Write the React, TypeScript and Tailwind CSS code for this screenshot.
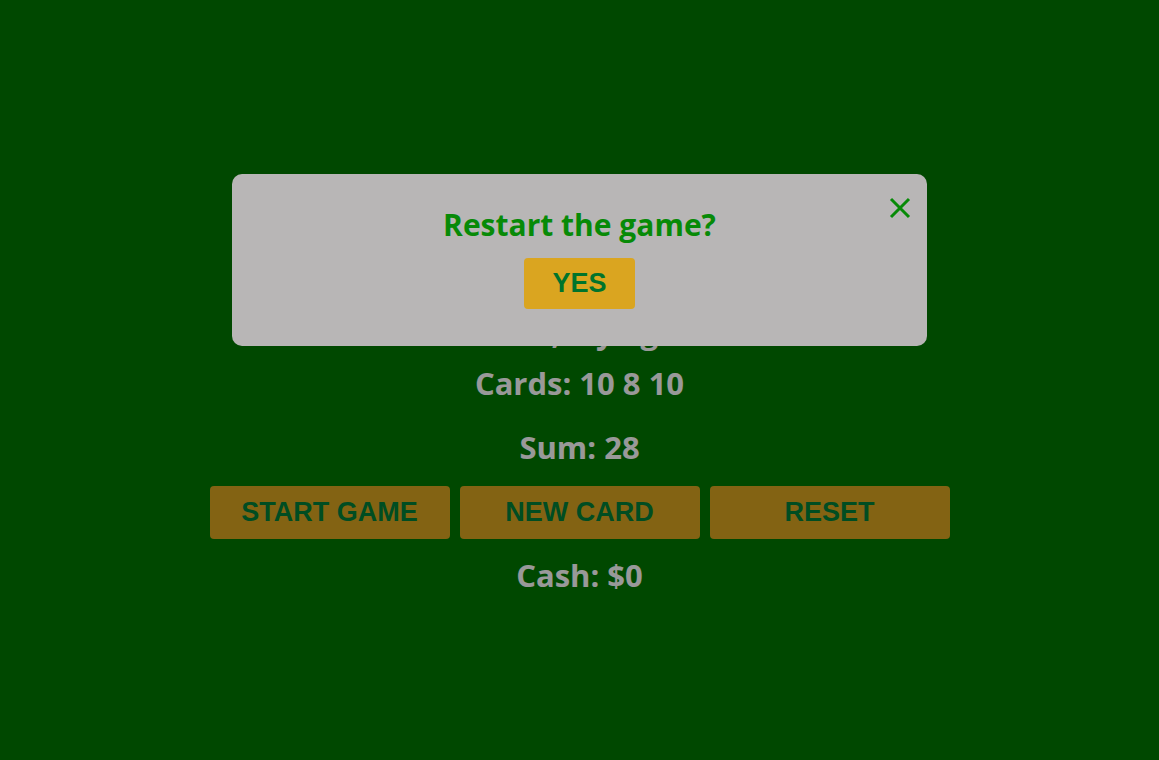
import { useState } from "react";

const body = "font-['Open_Sans','Noto_Sans',sans-serif] font-bold";
const btn =
  "font-['Liberation_Sans',Arial,sans-serif] font-bold uppercase text-[27px] text-[#00803a] bg-[#daa520] rounded-[4px]";

function App() {
  const [open, setOpen] = useState<boolean>(true);

  return (
    <div className="relative min-h-[760px] w-full bg-[#007800]">
      {/* game */}
      <div className={`flex flex-col items-center pt-[313px] text-white ${body}`}>
        <p className="text-[31px] leading-[38px]">Busted, try again!</p>
        <p className="mt-[13px] text-[31px] leading-[38px]">Cards: 10 8 10</p>
        <p className="mt-[26px] text-[31px] leading-[38px]">Sum: 28</p>
        <div className="mt-[20px] flex gap-[10px]">
          <button className={`${btn} w-[240px] h-[53px]`}>Start Game</button>
          <button className={`${btn} w-[240px] h-[53px]`}>New Card</button>
          <button className={`${btn} w-[240px] h-[53px]`}>Reset</button>
        </div>
        <p className="mt-[17px] text-[31px] leading-[38px]">Cash: $0</p>
      </div>

      {/* restart modal */}
      {open && (
        <div className="absolute inset-0 bg-black/40">
          <div className="relative mx-auto mt-[174px] flex h-[172px] w-[695px] flex-col items-center rounded-[10px] bg-[#b8b6b6] pt-[31px]">
            <button
              onClick={() => setOpen(false)}
              className="absolute right-[16px] top-[23px] text-[#078a07]"
            >
              <svg width="22" height="22" viewBox="0 0 22 22" fill="none" stroke="currentColor" strokeWidth="3">
                <path d="M2 2 L20 20 M20 2 L2 20" />
              </svg>
            </button>
            <p className={`${body} text-[30px] leading-[40px] text-[#078a07]`}>Restart the game?</p>
            <button className={`${btn} mt-[13px] w-[111px] h-[51px] !text-[27px] !text-[#00742c]`}>Yes</button>
          </div>
        </div>
      )}
    </div>
  );
}

export default App;
